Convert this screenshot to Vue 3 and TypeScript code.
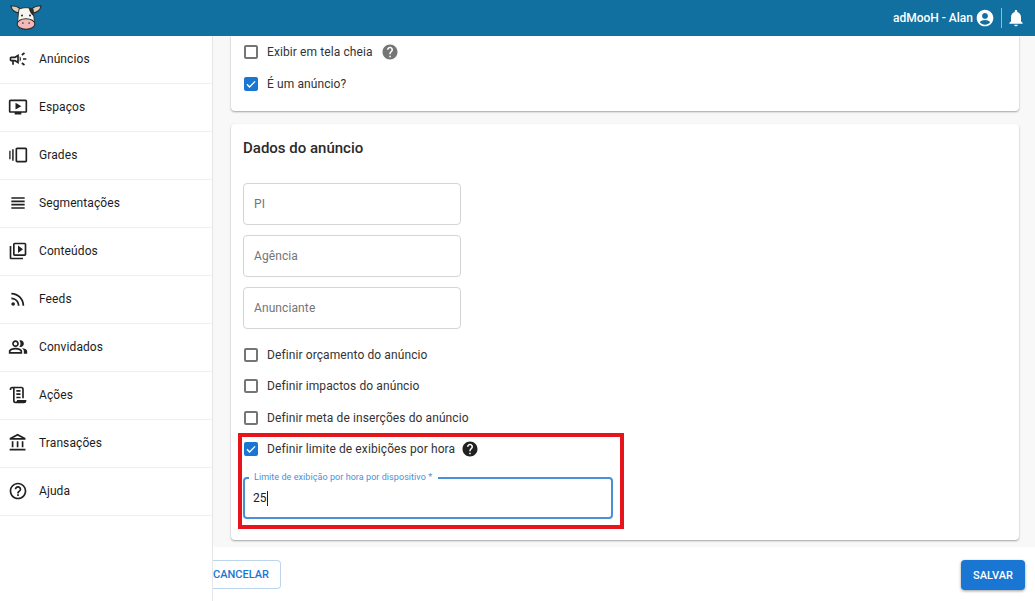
<script setup lang="ts">
interface NavItem { label: string; d: string; flip?: boolean }
const nav: NavItem[] = [
  { label: 'Anúncios', d: 'M18 11v2h4v-2h-4zm-2 6.61c.96.71 2.21 1.65 3.2 2.39.4-.53.8-1.07 1.2-1.6-.99-.74-2.24-1.68-3.2-2.4-.4.54-.8 1.08-1.2 1.61zM20.4 5.6c-.4-.53-.8-1.07-1.2-1.6-.99.74-2.24 1.68-3.2 2.4.4.53.8 1.07 1.2 1.6.96-.72 2.21-1.65 3.2-2.4zM4 9c-1.1 0-2 .9-2 2v2c0 1.1.9 2 2 2h1v4h2v-4h1l5 3V6L8 9H4zm5.03 1.71L11 9.53v4.94l-1.97-1.18-.48-.29H4v-2h4.55l.48-.29zM15.5 12c0-1.33-.58-2.53-1.5-3.35v6.69c.92-.81 1.5-2.01 1.5-3.34z' },
  { label: 'Espaços', d: 'M21 3H3c-1.11 0-2 .89-2 2v12c0 1.1.89 2 2 2h5v2h8v-2h5c1.1 0 1.99-.9 1.99-2L23 5c0-1.11-.9-2-2-2zm0 14H3V5h18v12zM16 11l-7 4V7z' },
  { label: 'Grades', d: 'M1.500 7h1.600v10H1.500zM5 5h1.800v14H5zM11 3h10c1.100 0 2 .9 2 2v14c0 1.100-.9 2-2 2H11c-1.100 0-2-.9-2-2V5c0-1.100.9-2 2-2zm0 2v14h10V5z' },
  { label: 'Segmentações', d: 'M4 15h16v-2H4v2zm0 4h16v-2H4v2zm0-8h16V9H4v2zm0-6v2h16V5H4z' },
  { label: 'Conteúdos', d: 'M4 6H2v14c0 1.1.9 2 2 2h14v-2H4V6zm16-4H8c-1.1 0-2 .9-2 2v12c0 1.1.9 2 2 2h12c1.1 0 2-.9 2-2V4c0-1.1-.9-2-2-2zm0 14H8V4h12v12zM12 5.500v9l6-4.500z' },
  { label: 'Feeds', d: 'M6.180 15.800a2.200 2.200 0 1 0 0 4.400 2.200 2.200 0 0 0 0-4.400zM4 4.500v2.100c7.400 0 13.400 6 13.400 13.400h2.100c0-8.600-6.900-15.500-15.500-15.500zm0 5.700v2.100c4.300 0 7.700 3.400 7.700 7.700h2.100c0-5.400-4.400-9.800-9.800-9.800z' },
  { label: 'Convidados', d: 'M16.670 13.130C18.040 14.060 19 15.320 19 17v3h4v-3c0-2.180-3.570-3.470-6.330-3.870zM15 12c2.210 0 4-1.790 4-4s-1.790-4-4-4c-.47 0-.91.1-1.330.24C14.500 5.270 15 6.580 15 8s-.5 2.730-1.330 3.760c.42.14.86.24 1.330.24zM9 12c2.210 0 4-1.790 4-4s-1.790-4-4-4-4 1.790-4 4 1.790 4 4 4zm0-6c1.100 0 2 .9 2 2s-.9 2-2 2-2-.9-2-2 .9-2 2-2zM9 13c-2.670 0-8 1.340-8 4v3h16v-3c0-2.660-5.330-4-8-4zm6 5H3v-.99C3.200 16.290 6.300 15 9 15s5.800 1.290 6 2v1z' },
  { label: 'Ações', flip: true, d: 'M15,20A1,1 0 0,0 16,19V4H8A1,1 0 0,0 7,5V16H5V5A3,3 0 0,1 8,2H19A3,3 0 0,1 22,5V6H20V5A1,1 0 0,0 19,4A1,1 0 0,0 18,5V9L18,19A3,3 0 0,1 15,22H5A3,3 0 0,1 2,19V18H13A2,2 0 0,0 15,20M9,6H14V8H9V6M9,10H14V12H9V10M9,14H14V16H9V14Z' },
  { label: 'Transações', d: 'M6.500 10h-2v7h2v-7zm6 0h-2v7h2v-7zm8.500 9H2v2h19v-2zm-2.500-9h-2v7h2v-7zm-7-6.740L16.710 6H6.290l5.210-2.740m0-2.260L2 6v2h19V6l-9.500-5z' },
  { label: 'Ajuda', d: 'M11 18h2v-2h-2v2zm1-16C6.480 2 2 6.480 2 12s4.480 10 10 10 10-4.480 10-10S17.520 2 12 2zm0 18c-4.410 0-8-3.590-8-8s3.590-8 8-8 8 3.590 8 8-3.590 8-8 8zm0-14c-2.210 0-4 1.790-4 4h2c0-1.100.9-2 2-2s2 .9 2 2c0 2-3 1.750-3 5h2c0-2.250 3-2.500 3-5 0-2.210-1.790-4-4-4z' },
]
const helpPath = 'M12 2C6.480 2 2 6.480 2 12s4.480 10 10 10 10-4.480 10-10S17.520 2 12 2zm1 17h-2v-2h2v2zm2.070-7.750l-.9.920C13.450 12.900 13 13.500 13 15h-2v-.5c0-1.100.45-2.100 1.170-2.830l1.240-1.260c.37-.36.59-.86.59-1.410 0-1.100-.9-2-2-2s-2 .9-2 2H8c0-2.210 1.790-4 4-4s4 1.790 4 4c0 .88-.36 1.680-.93 2.250z'
const fields: string[] = ['PI', 'Agência', 'Anunciante']
const checks: string[] = ['Definir orçamento do anúncio', 'Definir impactos do anúncio', 'Definir meta de inserções do anúncio']
</script>

<template>
  <div class="app">
    <header class="topbar">
      <svg class="logo" viewBox="0 0 36 30" width="32" height="26.700">
        <path d="M10 10C6 10 2 7 1 2c4 0 8 1 11 4z" fill="#d9cfc0" stroke="#2b2b2b" stroke-width="1.200"/>
        <path d="M26 10c4 0 8-3 9-8-4 0-8 1-11 4z" fill="#d9cfc0" stroke="#2b2b2b" stroke-width="1.200"/>
        <path d="M10 6c4-2.500 12-2.500 16 0l1.500 14h-19z" fill="#f7f5ef" stroke="#2b2b2b" stroke-width="1"/>
        <path d="M21 4.300c2 .2 3.800.7 5 1.700l.9 8c-2.400-1.500-5-5-5.900-9.700z" fill="#2b2b2b"/>
        <ellipse cx="18" cy="22.500" rx="10" ry="6" fill="#f3b8b8" stroke="#2b2b2b" stroke-width="1.200"/>
        <circle cx="14.500" cy="21.500" r=".9" fill="#333"/>
        <circle cx="21.500" cy="21.500" r=".9" fill="#333"/>
        <circle cx="13.500" cy="13" r="1.100" fill="#222"/>
        <circle cx="22.500" cy="13" r="1.100" fill="#222"/>
      </svg>
      <div class="top-right">
        <span class="user">adMooH - Alan</span>
        <svg class="top-icon" viewBox="0 0 24 24"><path d="M12 2C6.480 2 2 6.480 2 12s4.480 10 10 10 10-4.480 10-10S17.520 2 12 2zM12 6c1.940 0 3.500 1.560 3.500 3.500S13.940 13 12 13s-3.500-1.560-3.500-3.500S10.060 6 12 6zm0 14c-2.500 0-4.700-1.100-6.200-2.900.9-1.500 4-2.600 6.200-2.600s5.300 1.100 6.200 2.600C16.700 18.900 14.500 20 12 20z"/></svg>
        <span class="divider"></span>
        <svg class="top-icon" viewBox="0 0 24 24"><path d="M12 22c1.100 0 2-.9 2-2h-4c0 1.100.89 2 2 2zm6-6v-5c0-3.070-1.640-5.640-4.500-6.320V4c0-.83-.67-1.500-1.500-1.500s-1.500.67-1.500 1.500v.68C7.630 5.360 6 7.920 6 11v5l-2 2v1h16v-1l-2-2z"/></svg>
      </div>
    </header>
    <div class="body">
      <aside class="sidebar">
        <div v-for="item in nav" :key="item.label" class="nav-item">
          <svg class="nav-icon" :class="{ flip: item.flip }" viewBox="0 0 24 24"><path :d="item.d"/></svg>
          <span>{{ item.label }}</span>
        </div>
      </aside>
      <main class="main">
        <div class="scroll">
          <section class="card first">
            <div class="check-row">
              <span class="box"></span>
              <span>Exibir em tela cheia</span>
              <svg class="help grey" viewBox="0 0 24 24"><path :d="helpPath"/></svg>
            </div>
            <div class="check-row">
              <span class="box on"><svg viewBox="0 0 24 24"><path d="M5 12.500l4.500 4.500L19 7.500" fill="none" stroke="#fff" stroke-width="2.400"/></svg></span>
              <span>É um anúncio?</span>
            </div>
          </section>
          <section class="card second">
            <h2>Dados do anúncio</h2>
            <div v-for="f in fields" :key="f" class="field">{{ f }}</div>
            <div class="checks">
              <div v-for="c in checks" :key="c" class="check-row">
                <span class="box"></span>
                <span>{{ c }}</span>
              </div>
              <div class="check-row">
                <span class="box on"><svg viewBox="0 0 24 24"><path d="M5 12.500l4.500 4.500L19 7.500" fill="none" stroke="#fff" stroke-width="2.400"/></svg></span>
                <span>Definir limite de exibições por hora</span>
                <svg class="help dark" viewBox="0 0 24 24"><path :d="helpPath"/></svg>
              </div>
            </div>
            <div class="focus-field">
              <span class="legend">Limite de exibição por hora por dispositivo *</span>
              <span class="value">25</span><span class="caret"></span>
            </div>
            <div class="highlight"></div>
          </section>
        </div>
        <footer class="actions">
          <button class="btn cancel">CANCELAR</button>
          <button class="btn save">SALVAR</button>
        </footer>
      </main>
    </div>
  </div>
</template>

<style>
html, body { margin: 0; background: #fff; }
</style>

<style scoped>
.app { width: 1035px; height: 601px; display: flex; flex-direction: column; overflow: hidden; font-family: Roboto, "Liberation Sans", sans-serif; color: #212121; background: #fff; }
.topbar { height: 36px; flex: none; background: #11709f; display: flex; align-items: center; justify-content: space-between; padding: 0 9px 0 10px; box-sizing: border-box; color: #fff; z-index: 2; }
.logo { display: block; margin-top: -2px; }
.top-right { display: flex; align-items: center; font-size: 12px; font-weight: 500; }
.user { margin-right: 2px; }
.top-icon { width: 20px; height: 20px; fill: #fff; }
.divider { width: 1px; height: 20px; background: #8fbcd2; margin: 0 4px 0 6px; }
.body { flex: 1; display: flex; min-height: 0; }
.sidebar { width: 213px; flex: none; box-sizing: border-box; border-right: 1px solid #e6e6e6; background: #fff; }
.nav-item { height: 48px; box-sizing: border-box; border-bottom: 1px solid #efefef; display: flex; align-items: center; padding: 0 0 2px 8px; font-size: 12px; letter-spacing: .1px; color: #1c1c1c; }
.nav-icon { width: 20px; height: 20px; fill: #212121; margin-right: 11px; flex: none; }
.flip { transform: scaleX(-1); }
.main { flex: 1; min-width: 0; display: flex; flex-direction: column; }
.scroll { height: 511px; flex: none; box-sizing: border-box; background: #f8f8f8; padding: 0 16px 7px 18px; display: flex; flex-direction: column; gap: 13px; }
.card { background: #fff; border-radius: 0 0 4px 4px; box-shadow: 0 1px 2px rgba(0,0,0,.35); box-sizing: border-box; padding: 0 12px; }
.first { height: 75px; }
.second { height: 416px; border-radius: 4px; position: relative; padding-top: 14px; }
h2 { margin: 0 0 25px; font-size: 15px; line-height: 20px; font-weight: 500; color: #2a2a2a; }
.check-row { height: 32px; display: flex; align-items: center; font-size: 12px; letter-spacing: .1px; color: #333; }
.box { width: 14px; height: 14px; box-sizing: border-box; border: 2px solid #757575; border-radius: 2px; margin: 0 9px 0 1px; flex: none; display: flex; }
.box.on { background: #1976d2; border: none; }
.box svg { width: 100%; height: 100%; }
.help { width: 18px; height: 18px; margin-left: 8px; }
.help.grey { fill: #757575; }
.help.dark { fill: #212121; margin-left: 6px; }
.field { width: 217.500px; height: 42px; box-sizing: border-box; border: 1px solid #d4d4d4; border-radius: 4px; margin-bottom: 10px; display: flex; align-items: center; padding-left: 10px; font-size: 12px; letter-spacing: .1px; color: #757575; }
.checks { margin-top: 7px; display: flex; flex-direction: column; }
.checks .check-row { height: 31.500px; }
.focus-field { position: relative; width: 370px; height: 42px; margin-top: 12px; box-sizing: border-box; border: 2px solid #4a90d9; border-radius: 4px; display: flex; align-items: center; padding-left: 8px; font-size: 12px; color: #212121; }
.legend { position: absolute; left: 4px; top: -7px; background: #fff; padding: 0 6px 0 5px; font-size: 9px; letter-spacing: .06px; line-height: 11px; color: #4a90d9; }
.caret { width: 1px; height: 15px; background: #212121; }
.highlight { position: absolute; left: 7px; top: 309px; width: 386px; height: 96px; box-sizing: border-box; border: 4px solid #e8141c; pointer-events: none; }
.actions { flex: 1; display: flex; justify-content: space-between; align-items: flex-start; padding: 13px 10px 0 0; background: #fff; }
.btn { height: 29px; box-sizing: border-box; border-radius: 4px; font-family: inherit; font-size: 11px; font-weight: 500; padding: 0; }
.cancel { width: 67.500px; background: #fff; border: 1px solid #bcd6f0; border-left: none; border-radius: 0 4px 4px 0; color: #1976d2; text-align: left; }
.save { width: 64px; height: 30px; background: #1976d2; border: none; color: #fff; box-shadow: 0 1px 3px rgba(0,0,0,.4); }
</style>
